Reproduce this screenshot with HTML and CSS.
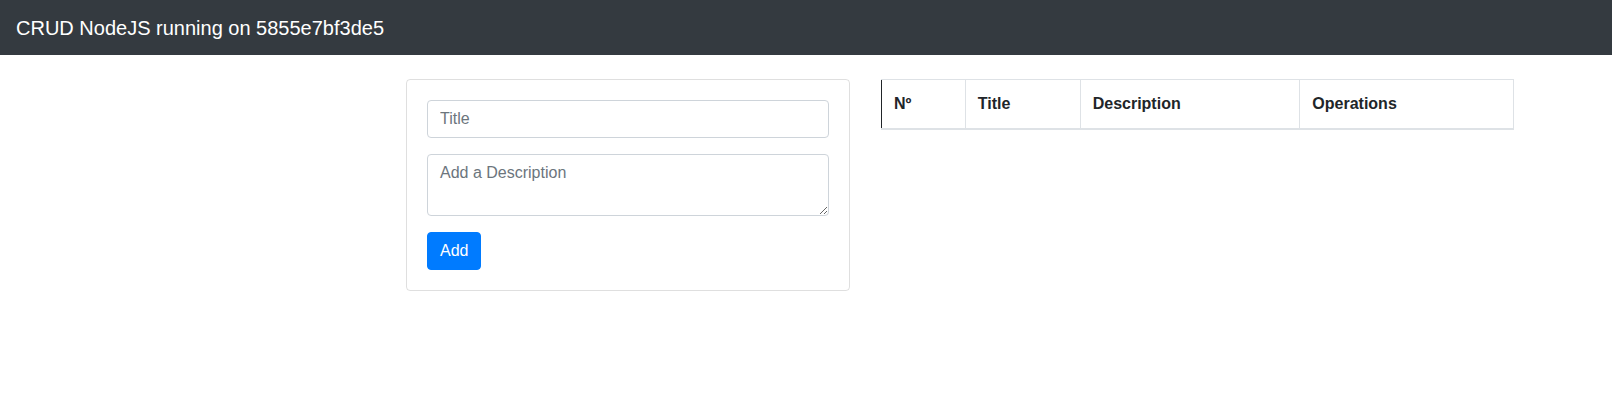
FILE: index.html
```html
<!DOCTYPE html>
<html lang="en">
<head>
<meta charset="utf-8">
<title>CRUD NodeJS</title>
<link rel="stylesheet" href="styles.css">
</head>
<body>
<nav class="navbar">
  <span class="brand">CRUD NodeJS running on 5855e7bf3de5</span>
</nav>
<main class="page">
  <section class="card">
    <form class="card-body">
      <div class="form-group">
        <input class="form-control" type="text" placeholder="Title">
      </div>
      <div class="form-group">
        <textarea class="form-control area" rows="2" placeholder="Add a Description"></textarea>
      </div>
      <button class="btn" type="button">Add</button>
    </form>
  </section>
  <section class="table-wrap">
    <table class="table">
      <thead>
        <tr>
          <th class="c-no">Nº</th>
          <th class="c-title">Title</th>
          <th class="c-desc">Description</th>
          <th class="c-ops">Operations</th>
        </tr>
      </thead>
      <tbody></tbody>
    </table>
  </section>
</main>
</body>
</html>
```
FILE: styles.css
```css
* { box-sizing: border-box; }
body {
  margin: 0;
  font-family: "Liberation Sans", Arial, sans-serif;
  font-size: 16px;
  line-height: 1.5;
  color: #212529;
  background: #fff;
}
.navbar {
  height: 55px;
  background: #343a40;
  display: flex;
  align-items: center;
  padding: 0 16px;
}
.brand {
  color: #fff;
  font-size: 20px;
  line-height: 30px;
}
.page {
  display: flex;
  align-items: flex-start;
  gap: 31px;
  padding: 24px 0 0 406px;
}
.card {
  width: 444px;
  border: 1px solid rgba(0,0,0,.125);
  border-radius: 4px;
}
.card-body { padding: 20px; margin: 0; }
.form-group { margin-bottom: 16px; }
.form-control {
  display: block;
  width: 100%;
  height: 38px;
  padding: 6px 12px;
  font-family: inherit;
  font-size: 16px;
  line-height: 24px;
  color: #495057;
  border: 1px solid #ced4da;
  border-radius: 4px;
  background: #fff;
}
.form-control::placeholder { color: #6c757d; opacity: 1; }
.area { height: 62px; resize: vertical; }
.btn {
  display: block;
  height: 38px;
  padding: 6px 12px;
  font-family: inherit;
  font-size: 16px;
  line-height: 24px;
  color: #fff;
  background: #007bff;
  border: 1px solid #007bff;
  border-radius: 4px;
}
.table-wrap { width: 633px; }
.table {
  width: 100%;
  border-collapse: collapse;
}
.table th {
  text-align: left;
  font-weight: bold;
  padding: 12px;
  line-height: 24px;
  border: 1px solid #dee2e6;
  border-bottom-width: 2px;
  vertical-align: bottom;
}
.table th.c-no { border-left-color: #212529; }
.c-no { width: 84px; }
.c-title { width: 115px; }
.c-desc { width: 220px; }
.c-ops { width: 214px; }
```
